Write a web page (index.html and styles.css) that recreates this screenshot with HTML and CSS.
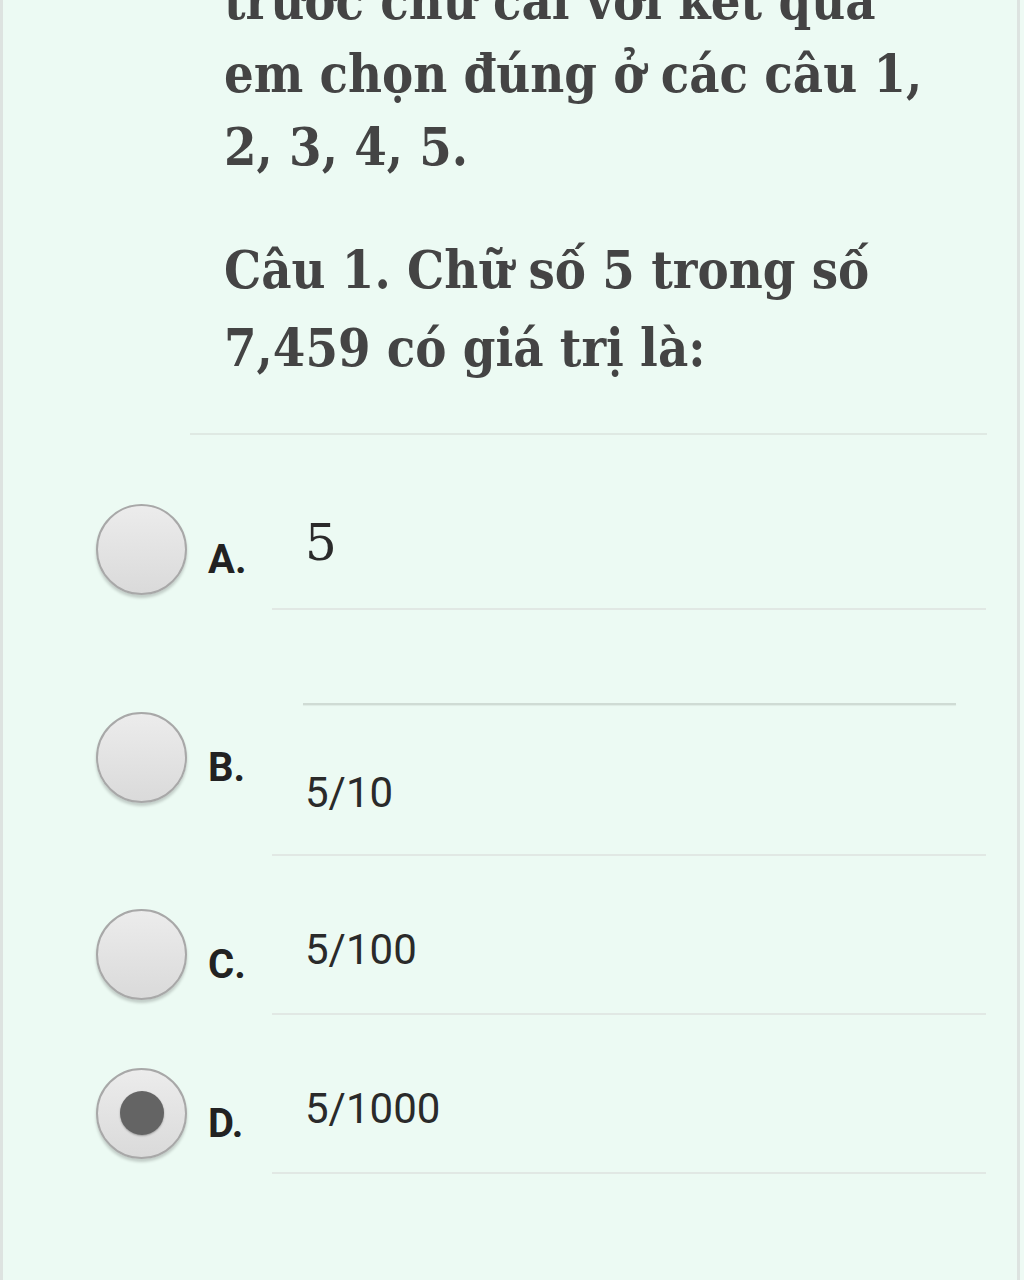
FILE: index.html
```html
<!DOCTYPE html>
<html lang="vi">
<head>
    <meta charset="UTF-8">
    <meta name="viewport" content="width=device-width, initial-scale=1.0">
    <title>Câu 1</title>
    <link rel="stylesheet" href="styles.css">
</head>
<body>

<div class="sheet">
    <!-- Question text -->
    <p class="prompt intro">trước chữ cái với kết quả<br>em chọn đúng ở các câu 1,<br>2, 3, 4, 5.</p>
    <p class="prompt question">Câu 1. Chữ số 5 trong số<br>7,459 có giá trị là:</p>

    <hr class="divider">

    <!-- Choices -->
    <ul class="choices">
        <li class="choice">
            <span class="radio"></span>
            <span class="letter">A.</span>
            <div class="answer answer-serif"><span class="value">5</span></div>
        </li>
        <li class="choice choice-tall">
            <span class="radio"></span>
            <span class="letter">B.</span>
            <div class="answer">
                <div class="answer-rule"></div>
                <span class="value">5/10</span>
            </div>
        </li>
        <li class="choice">
            <span class="radio"></span>
            <span class="letter">C.</span>
            <div class="answer"><span class="value">5/100</span></div>
        </li>
        <li class="choice">
            <span class="radio checked"></span>
            <span class="letter">D.</span>
            <div class="answer"><span class="value">5/1000</span></div>
        </li>
    </ul>
</div>

</body>
</html>
```

FILE: styles.css
```css
body {
    margin: 0;
    padding: 0;
    background-color: #eefaf4;
    font-family: 'Roboto', 'Liberation Sans', sans-serif;
}

.sheet {
    display: flow-root;
    width: 1020px;
    min-height: 100vh;
    box-sizing: border-box;
    background-color: #ecfaf3;
    border-left: 3px solid #dde3e0;
    border-right: 3px solid #dde3e0;
}

.prompt {
    margin: 0;
    padding-left: 221px;
    font-family: 'DejaVu Serif', 'Liberation Serif', serif;
    font-stretch: condensed;
    font-weight: bold;
    font-size: 52px;
    color: #444;
}

.intro {
    margin-top: -36px;
    line-height: 73px;
}

.question {
    margin-top: 48px;
    line-height: 78px;
}

.divider {
    margin: 46px 30px 0 187px;
    height: 2px;
    border: 0;
    background-color: #dfe9e3;
}

.choices {
    list-style: none;
    margin: 53px 0 0 0;
    padding: 0 0 0 93px;
}

.choice {
    display: flex;
    align-items: center;
    margin-bottom: 37px;
}

.choice-tall {
    margin-top: 48px;
}

.radio {
    flex: none;
    display: flex;
    align-items: center;
    justify-content: center;
    width: 91px;
    height: 91px;
    box-sizing: border-box;
    border-radius: 50%;
    border: 2px solid #a8a8a8;
    background: linear-gradient(#ececec, #dadada);
    box-shadow: 0 3px 3px rgba(0, 0, 0, 0.18);
}

.radio.checked::after {
    content: "";
    width: 44px;
    height: 44px;
    border-radius: 50%;
    background-color: #646464;
    box-shadow: 0 1px 2px rgba(0, 0, 0, 0.3);
}

.letter {
    flex: none;
    width: 64px;
    margin-left: 21px;
    padding-top: 22px;
    font-weight: bold;
    font-size: 40px;
    line-height: 40px;
    color: #222;
}

.answer {
    flex: 1;
    height: 122px;
    box-sizing: border-box;
    margin-right: 31px;
    padding: 32px 0 0 33px;
    border-bottom: 2px solid #e1e8e4;
}

.value {
    display: block;
    font-size: 42px;
    line-height: 50px;
    color: #2a2a2a;
}

.answer-serif {
    padding-top: 26px;
}

.answer-serif .value {
    font-family: 'DejaVu Serif', 'Liberation Serif', serif;
    font-size: 50px;
    line-height: 58px;
}

.choice-tall .answer {
    height: 198px;
    padding-top: 0;
}

.answer-rule {
    height: 2px;
    margin: 45px 30px 0 -2px;
    background-color: #cfdbd4;
    box-shadow: 0 1px 1px rgba(0, 0, 0, 0.06);
}

.choice-tall .value {
    margin-top: 63px;
}
```
